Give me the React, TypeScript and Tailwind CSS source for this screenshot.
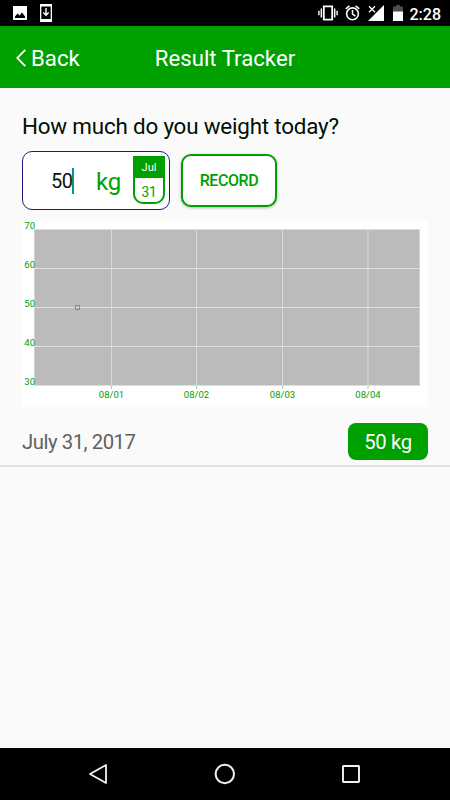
const yTicks = [
  { label: '70', y: 8.5 },
  { label: '60', y: 47.5 },
  { label: '50', y: 86.5 },
  { label: '40', y: 125.5 },
  { label: '30', y: 164.5 },
];

const xTicks = [
  { label: '08/01', x: 89.5 },
  { label: '08/02', x: 174.5 },
  { label: '08/03', x: 260.5 },
  { label: '08/04', x: 346 },
];

export default function App() {
  return (
    <div className="flex h-[800px] w-[450px] flex-col overflow-hidden bg-[#fafafa] font-['Roboto',sans-serif]">
      <StatusBar />

      <header className="grid h-[62px] shrink-0 grid-cols-[1fr_auto_1fr] items-center bg-[#00a000] px-4 pt-[3px] text-[22.2px] text-white">
        <button className="flex items-center gap-[5px]">
          <svg width="10" height="18" viewBox="0 0 10 18" fill="none" stroke="currentColor" strokeWidth="1.8">
            <path d="M9.3 0.8 1.2 9l8.1 8.2" />
          </svg>
          Back
        </button>
        <h1>Result Tracker</h1>
      </header>

      <main className="grow">
        <div className="px-[22px] pt-[22px]">
          <h2 className="h-[41px] text-[22.4px] leading-8 tracking-[-0.19px] whitespace-nowrap text-[#001000]">How much do you weight today?</h2>
          <div className="flex items-center gap-[11px]">
            <div className="flex h-[59px] w-[148px] items-center rounded-[10px] border border-[#241a80] bg-white">
              <span className="ml-7 w-[21px] text-[20px] tracking-[-0.6px] text-[#111]">50</span>
              <span className="h-[26px] w-0.5 bg-[#009688]" />
              <span className="ml-[22px] w-[25px] pt-0.5 text-[24px] tracking-[-0.2px] text-[#00a000]">kg</span>
              <CalendarBadge month="Jul" day="31" />
            </div>
            <button className="h-[53px] w-24 rounded-[10px] border-2 border-[#00a000] bg-white pt-px text-[16px] font-medium tracking-[-0.4px] text-[#00a000] shadow-[0_1px_3px_rgba(0,0,0,0.3)]">
              RECORD
            </button>
          </div>
          <WeightChart />
        </div>

        <div className="mt-4 flex h-[44px] justify-between border-b-2 border-[#e2e2e2] px-[22px]">
          <span className="text-[20.3px] leading-[39px] tracking-[-0.45px] text-[#606060]">July 31, 2017</span>
          <span className="h-[37px] w-20 rounded-[8px] bg-[#00a000] text-center text-[20.3px] leading-[39px] tracking-[-0.4px] text-white">50 kg</span>
        </div>
      </main>

      <NavigationBar />
    </div>
  );
}

function StatusBar() {
  return (
    <div className="flex h-[26px] shrink-0 items-center bg-black pr-[9px] pl-[13px] text-white">
      <svg width="14" height="14" viewBox="0 0 14 14">
        <path fill="#fff" d="M0 0h14v14H0z" />
        <path fill="#000" d="M2 12V10.5L4.5 7.5 6.5 9.5 9 6.5 12 10.5V12z" />
      </svg>
      <svg className="ml-[13px]" width="12" height="18" viewBox="0 0 12 18">
        <path fill="#fff" d="M0 0h12v18H0z" />
        <path fill="#000" d="M1.3 2.5h9.4v12.5H1.3z" />
        <path d="M6 4v7M3.3 8.5 6 11.2 8.7 8.5" fill="none" stroke="#fff" strokeWidth="1.4" />
      </svg>

      <div className="ml-auto flex items-center">
        <svg width="20" height="16" viewBox="0 0 20 16" fill="none" stroke="#fff">
          <path d="M5.8 1.3h8.4v13.4H5.8z" strokeWidth="1.8" />
          <path d="M3.3 3.5v9M16.7 3.5v9M.9 5.7v4.6M19.1 5.7v4.6" strokeWidth="1.4" />
        </svg>
        <svg className="ml-[7px]" width="15" height="16" viewBox="0 0 15 16" fill="none" stroke="#fff">
          <circle cx="7.5" cy="8.8" r="5.9" strokeWidth="1.6" />
          <path d="M7.5 5v4.2l3 1.9M.7 3.8 4.4.8M14.3 3.8 10.6.8" strokeWidth="1.5" />
        </svg>
        <svg className="ml-[8px]" width="16" height="16" viewBox="0 0 16 16">
          <path d="M16 0v16H0z" fill="#fff" />
          <path d="M0 0h9v4L6 8H2z" fill="#000" />
          <path d="m1 1.2 6 6M7 1.2l-6 6" stroke="#fff" strokeWidth="1.3" />
        </svg>
        <svg className="ml-[9px]" width="10" height="16" viewBox="0 0 10 16">
          <path d="M3 0h4v1.5h3V7H0V1.5h3z" fill="#4d4d4d" />
          <path d="M0 6.5h10V16H0z" fill="#fff" />
        </svg>
        <span className="ml-[7px] pt-[3px] text-[16px] leading-5 font-medium">2:28</span>
      </div>
    </div>
  );
}

function CalendarBadge({ month, day }: { month: string; day: string }) {
  return (
    <div className="mb-px ml-[12px] flex h-12 w-8 shrink-0 flex-col overflow-hidden rounded-b-[10px] border-2 border-t-0 border-[#00a000] text-center">
      <span className="h-[22px] shrink-0 bg-[#00a000] text-[11px] leading-[23px] text-white">{month}</span>
      <span className="text-[13.8px] leading-[28px] tracking-[-0.2px] text-[#00a000]">{day}</span>
    </div>
  );
}

function WeightChart() {
  return (
    <svg className="mt-[11px] block bg-white" width="406" height="186" viewBox="0 0 406 186">
      <path d="M12 8h386v157H12z" fill="#bbb" />
      {yTicks.map((tick) => (
        <path key={tick.label} d={`M12 ${tick.y}h386`} stroke="#dedede" />
      ))}
      {xTicks.map((tick) => (
        <g key={tick.label}>
          <path d={`M${tick.x} 8v157`} stroke="#dadada" />
          <path d={`M${tick.x} 165v3`} stroke="#9bd69b" />
        </g>
      ))}
      <path d="M12.5 8v157M397.5 8v157" stroke="#d2d2d2" />
      <g fill="#00a000" className="text-[9.5px]">
        {yTicks.map((tick) => (
          <text key={tick.label} x="13" y={tick.y - 0.5} textAnchor="end">{tick.label}</text>
        ))}
        {xTicks.map((tick) => (
          <text key={tick.label} x={tick.x} y="177" textAnchor="middle">{tick.label}</text>
        ))}
      </g>
      <path d="M53.5 84.5h4v4h-4z" fill="none" stroke="#55a655" />
    </svg>
  );
}

function NavigationBar() {
  return (
    <nav className="flex h-[52px] shrink-0 items-center justify-between bg-black px-[89px]">
      <svg width="18" height="22" viewBox="0 0 18 22" fill="none" stroke="#f2f2f2" strokeWidth="1.8" strokeLinejoin="round">
        <path d="M17 2v18L1 11z" />
      </svg>
      <svg width="22" height="22" viewBox="0 0 22 22" fill="none" stroke="#f2f2f2" strokeWidth="2">
        <circle cx="11.8" cy="11" r="9.2" />
      </svg>
      <svg width="20" height="20" viewBox="0 0 20 20" fill="none" stroke="#f2f2f2" strokeWidth="1.9">
        <rect x="2" y="2" width="16" height="16" rx="0.5" />
      </svg>
    </nav>
  );
}
